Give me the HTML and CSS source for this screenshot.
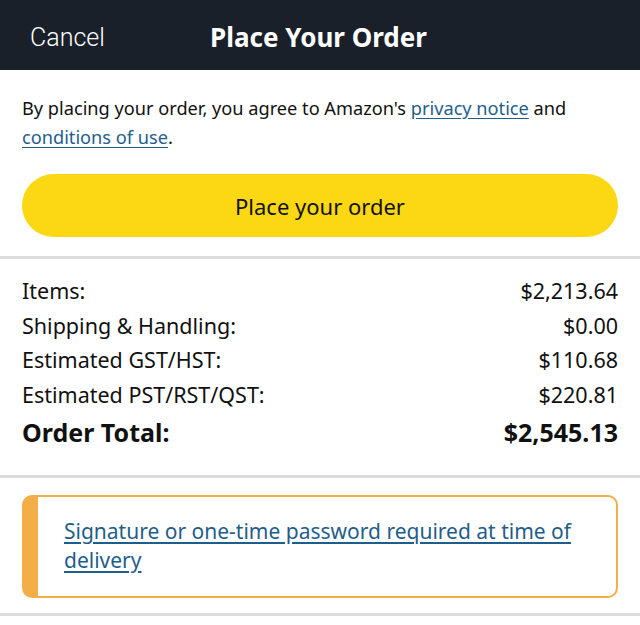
FILE: index.html
```html
<!DOCTYPE html>
<html lang="en">
<head>
  <meta charset="UTF-8" />
  <meta name="viewport" content="width=device-width, initial-scale=1.0" />
  <title>Place Your Order</title>
  <link rel="stylesheet" href="styles.css">
</head>
<body>
  <header class="topbar">
    <a class="cancel" href="#">Cancel</a>
    <h1>Place Your Order</h1>
  </header>

  <section class="agree">
    <p>By placing your order, you agree to Amazon's <a href="#">privacy notice</a> and <a href="#">conditions of use</a>.</p>
    <button class="place-btn">Place your order</button>
  </section>

  <section class="summary">
    <div class="row"><span>Items:</span><span>$2,213.64</span></div>
    <div class="row"><span>Shipping &amp; Handling:</span><span>$0.00</span></div>
    <div class="row"><span>Estimated GST/HST:</span><span>$110.68</span></div>
    <div class="row"><span>Estimated PST/RST/QST:</span><span>$220.81</span></div>
    <div class="row total"><span>Order Total:</span><span>$2,545.13</span></div>
  </section>

  <section class="notice-wrap">
    <div class="notice">
      <a href="#">Signature or one-time password required at time of delivery</a>
    </div>
  </section>
</body>
</html>
```

FILE: styles.css
```css
body {
  margin: 0;
  font-family: 'Noto Sans', Arial, sans-serif;
  color: #111;
  background: #fff;
}
.topbar {
  background: #19202a;
  height: 70px;
  display: flex;
  align-items: center;
  padding: 4px 30px 0;
  box-sizing: border-box;
}
.cancel {
  color: #fff;
  text-decoration: none;
  font-family: Roboto, sans-serif;
  font-weight: 300;
  font-size: 25px;
  width: 180px;
}
.topbar h1 {
  margin: 0;
  color: #fff;
  font-size: 26px;
  font-weight: 700;
}
.agree {
  padding: 24px 22px 19px;
  border-bottom: 3px solid #dcdcdc;
}
.agree p {
  margin: 0 0 22px;
  font-size: 18.2px;
  line-height: 29px;
}
a {
  color: #1f5e8a;
  text-decoration: underline;
  text-underline-offset: 3px;
}
.place-btn {
  width: 100%;
  height: 63px;
  border: none;
  border-radius: 32px;
  background: #fcd814;
  font-family: inherit;
  font-size: 22px;
  color: #111;
}
.summary {
  padding: 15px 22px 23px;
  border-bottom: 3px solid #dcdcdc;
}
.row {
  display: flex;
  justify-content: space-between;
  font-size: 21.5px;
  line-height: 34.5px;
}
.row.total {
  font-weight: 700;
  font-size: 25px;
  line-height: 40px;
}
.notice-wrap {
  padding: 17px 22px 15px;
  border-bottom: 3px solid #dcdcdc;
}
.notice {
  border: 2px solid #f4ae48;
  border-left: 16px solid #f4ae48;
  border-radius: 10px;
  padding: 20px 24px 21px 26px;
}
.notice a {
  font-size: 21px;
  line-height: 29px;
}
```
